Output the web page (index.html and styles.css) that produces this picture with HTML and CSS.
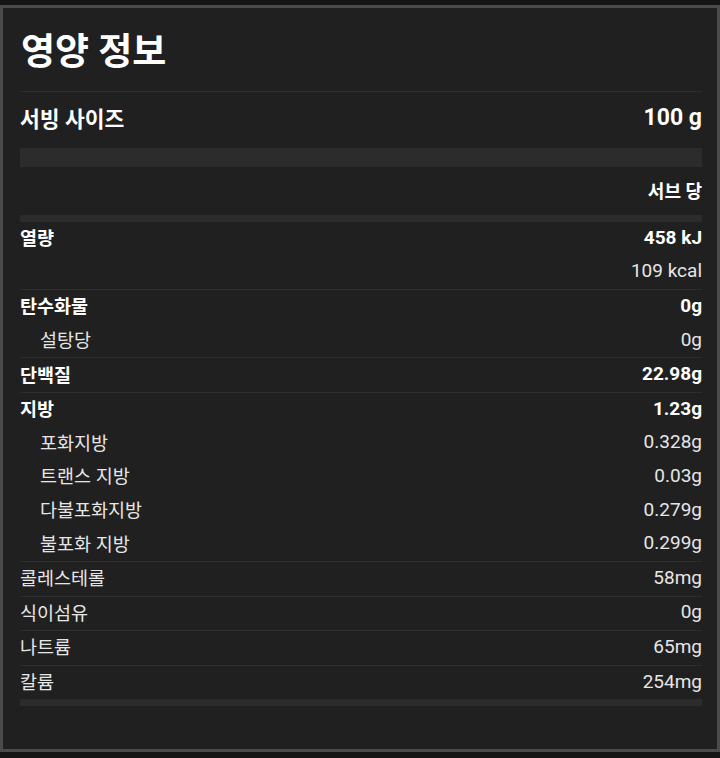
FILE: index.html
```html
<!DOCTYPE html>
<html lang="ko">
<head>
    <meta charset="UTF-8">
    <meta name="viewport" content="width=device-width, initial-scale=1.0">
    <title>영양 정보</title>
    <link rel="stylesheet" href="styles.css">
</head>
<body>
    <div class="panel">
        <h1 class="title">영양 정보</h1>

        <div class="serving">
            <span>서빙 사이즈</span>
            <span class="num">100 g</span>
        </div>
        <div class="bar bar-wide"></div>

        <div class="per">서브 당</div>
        <div class="bar bar-thin"></div>

        <div class="group">
            <div class="row main"><span>열량</span><span class="num">458 kJ</span></div>
            <div class="row"><span></span><span class="num">109 kcal</span></div>
        </div>
        <div class="group">
            <div class="row main"><span>탄수화물</span><span class="num">0g</span></div>
            <div class="row sub"><span>설탕당</span><span class="num">0g</span></div>
        </div>
        <div class="group">
            <div class="row main"><span>단백질</span><span class="num">22.98g</span></div>
        </div>
        <div class="group">
            <div class="row main"><span>지방</span><span class="num">1.23g</span></div>
            <div class="row sub"><span>포화지방</span><span class="num">0.328g</span></div>
            <div class="row sub"><span>트랜스 지방</span><span class="num">0.03g</span></div>
            <div class="row sub"><span>다불포화지방</span><span class="num">0.279g</span></div>
            <div class="row sub"><span>불포화 지방</span><span class="num">0.299g</span></div>
        </div>
        <div class="group">
            <div class="row"><span>콜레스테롤</span><span class="num">58mg</span></div>
        </div>
        <div class="group">
            <div class="row"><span>식이섬유</span><span class="num">0g</span></div>
        </div>
        <div class="group">
            <div class="row"><span>나트륨</span><span class="num">65mg</span></div>
        </div>
        <div class="group last">
            <div class="row"><span>칼륨</span><span class="num">254mg</span></div>
        </div>
        <div class="bar bar-end"></div>
    </div>
</body>
</html>
```

FILE: styles.css
```css
/* Pagina */
body {
    margin: 0;
    padding-top: 5px;
    background: #151515;
    font-family: Roboto, 'Noto Sans CJK KR', sans-serif;
    color: #e6e6e6;
}

/* Riquadro principale */
.panel {
    box-sizing: border-box;
    width: 720px;
    height: 747px;
    border: 3px solid #4b4b4b;
    background: #202020;
    padding: 0 15px 0 17px;
}

.title {
    margin: 0;
    padding: 24px 0 17px 1px;
    font-size: 37px;
    line-height: 42px;
    font-weight: 700;
    color: #fff;
    border-bottom: 1px solid #2e2e2e;
}

.serving {
    display: flex;
    justify-content: space-between;
    align-items: center;
    height: 50px;
    padding-bottom: 6px;
    font-size: 21.5px;
    font-weight: 700;
    color: #fff;
}

.serving .num {
    font-size: 23px;
}

.bar {
    background: #2c2c2c;
}

.bar-wide {
    height: 19px;
}

.bar-thin {
    height: 7px;
}

.bar-end {
    height: 7px;
}

.per {
    display: flex;
    justify-content: flex-end;
    align-items: center;
    height: 46px;
    padding-bottom: 2px;
    font-size: 18px;
    font-weight: 700;
    color: #fff;
}

/* Righe nutrienti */
.group {
    border-bottom: 1px solid #2e2e2e;
}

.group.last {
    border-bottom: none;
}

.row {
    box-sizing: border-box;
    display: flex;
    justify-content: space-between;
    align-items: center;
    height: 33.6px;
    padding-bottom: 3px;
    font-size: 18.5px;
}

.row .num {
    font-size: 19px;
}

.row.main {
    font-weight: 700;
    color: #fff;
}

.row.sub span:first-child {
    padding-left: 20px;
}
```
